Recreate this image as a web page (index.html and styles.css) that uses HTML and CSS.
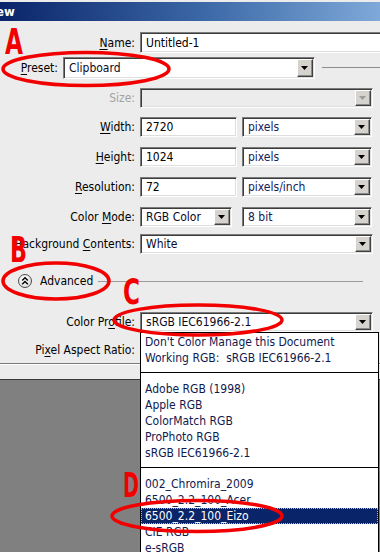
FILE: index.html
```html
<!DOCTYPE html>
<html>
<head>
<meta charset="utf-8">
<link rel="stylesheet" href="styles.css">
</head>
<body>
<div class="dialog">
  <div class="titlebar"><span class="title">ew</span></div>
  <div class="form">
    <div class="row r-name">
      <span class="lbl"><u>N</u>ame:</span>
      <div class="input wide">Untitled-1</div>
    </div>
    <div class="row r-preset">
      <span class="lbl lbl-preset"><u>P</u>reset:</span>
      <div class="select preset"><span class="val dark">Clipboard</span><span class="btn"><i class="tri"></i></span></div>
      <div class="rule"></div>
    </div>
    <div class="row r-size">
      <span class="lbl disabled">Size:</span>
      <div class="select full off"><span class="val"></span><span class="btn"><i class="tri"></i></span></div>
    </div>
    <div class="row r-gap10 r-first">
      <span class="lbl"><u>W</u>idth:</span>
      <div class="input num">2720</div>
      <div class="select unit"><span class="val">pixels</span><span class="btn"><i class="tri"></i></span></div>
    </div>
    <div class="row r-gap10">
      <span class="lbl"><u>H</u>eight:</span>
      <div class="input num">1024</div>
      <div class="select unit"><span class="val">pixels</span><span class="btn"><i class="tri"></i></span></div>
    </div>
    <div class="row r-gap10">
      <span class="lbl"><u>R</u>esolution:</span>
      <div class="input num">72</div>
      <div class="select unit"><span class="val">pixels/inch</span><span class="btn"><i class="tri"></i></span></div>
    </div>
    <div class="row r-gap10">
      <span class="lbl">Color <u>M</u>ode:</span>
      <div class="select mode"><span class="val dark">RGB Color</span><span class="btn"><i class="tri"></i></span></div>
      <div class="select bit"><span class="val">8 bit</span><span class="btn"><i class="tri"></i></span></div>
    </div>
    <div class="row r-bg">
      <span class="lbl">Background <u>C</u>ontents:</span>
      <div class="select full"><span class="val dark">White</span><span class="btn"><i class="tri"></i></span></div>
    </div>
    <div class="row r-adv">
      <span class="adv-btn">
        <svg width="10" height="10" viewBox="0 0 10 10"><polyline points="2.2,4.6 5,1.8 7.8,4.6" fill="none" stroke="#000" stroke-width="1.4"/><polyline points="2.2,8.2 5,5.4 7.8,8.2" fill="none" stroke="#000" stroke-width="1.4"/></svg>
      </span>
      <span class="adv-text">Advanced</span>
      <span class="adv-line"></span>
    </div>
    <div class="row r-profile">
      <span class="lbl">Color Pr<u>o</u>file:</span>
      <div class="select full"><span class="val dark">sRGB IEC61966-2.1</span><span class="btn"><i class="tri"></i></span></div>
    </div>
    <div class="row r-par">
      <span class="lbl">Pi<u>x</u>el Aspect Ratio:</span>
      <div class="select full"><span class="val"></span><span class="btn"><i class="tri"></i></span></div>
    </div>
    <div class="etch"></div>
  </div>
</div>

<div class="menu">
  <div class="item">Don't Color Manage this Document</div>
  <div class="item">Working RGB:  sRGB IEC61966-2.1</div>
  <div class="sep"></div>
  <div class="item">Adobe RGB (1998)</div>
  <div class="item">Apple RGB</div>
  <div class="item">ColorMatch RGB</div>
  <div class="item">ProPhoto RGB</div>
  <div class="item">sRGB IEC61966-2.1</div>
  <div class="sep"></div>
  <div class="item">002_Chromira_2009</div>
  <div class="item">6500_2.2_100_Acer</div>
  <div class="item sel">6500_2.2_100_Eizo</div>
  <div class="item">CIE RGB</div>
  <div class="item">e-sRGB</div>
</div>

<svg class="marks" width="380" height="552" viewBox="0 0 380 552">
  <g class="ring">
    <ellipse cx="86" cy="69" rx="83" ry="16.5"/>
    <ellipse cx="56" cy="281" rx="53" ry="18"/>
    <ellipse cx="198" cy="320" rx="84" ry="15"/>
    <ellipse cx="197" cy="516" rx="85" ry="15.5"/>
  </g>
  <g class="letters">
    <text x="5" y="54" textLength="18" lengthAdjust="spacingAndGlyphs">A</text>
    <text x="10" y="262" textLength="17" lengthAdjust="spacingAndGlyphs">B</text>
    <text x="123" y="304" textLength="17" lengthAdjust="spacingAndGlyphs">C</text>
    <text x="123" y="497" textLength="16" lengthAdjust="spacingAndGlyphs" class="small">D</text>
  </g>
</svg>
</body>
</html>
```
FILE: styles.css
```css
* { box-sizing: border-box; }
html, body { margin: 0; }
body {
  width: 380px;
  height: 552px;
  overflow: hidden;
  position: relative;
  background: #808080;
  font: 12px/1 "DejaVu Sans Condensed", "DejaVu Sans", sans-serif;
  color: #000;
}
u { text-decoration: underline; text-underline-offset: 2px; }

.dialog {
  background: #ececec;
  height: 380px;
  padding-top: 2px;
  border-bottom: 1px solid #3a3a3a;
}
.titlebar {
  height: 19px;
  background: linear-gradient(90deg, #0a246a 0%, #3d6aa8 55%, #7fa9d9 100%);
  color: #fff;
  font-weight: bold;
  font-size: 13px;
  line-height: 19px;
  overflow: hidden;
  white-space: nowrap;
}
.title { display: inline-block; margin-left: -4px; }

.form { padding-top: 11px; }
.row { display: flex; align-items: center; height: 20px; }
.lbl {
  flex: none;
  width: 140px;
  padding-right: 5px;
  text-align: right;
  white-space: nowrap;
}
.lbl-preset { width: 63px; }
.disabled { color: #a3a3a3; }

.r-name { height: 21px; }
.r-preset { margin-top: 4px; height: 22px; }
.r-size { margin-top: 9px; }
.r-first { margin-top: 9px; }
.r-gap10 + .r-gap10 { margin-top: 10px; }
.r-bg { margin-top: 7px; }
.r-adv { margin-top: 20px; height: 14px; padding-left: 18px; }
.r-profile { margin-top: 24px; }
.r-par { margin-top: 8px; }

.input, .select {
  flex: none;
  height: 100%;
  background: #fff;
  border: 1px solid;
  border-color: #7b7b7b #fff #fff #7b7b7b;
  box-shadow: inset 1px 1px 0 #3c3c3c, inset -1px -1px 0 #dedede;
  white-space: nowrap;
  overflow: hidden;
}
.input {
  padding: 0 0 0 5px;
  display: flex;
  align-items: center;
}
.wide { width: 260px; border-right: 0; }
.num { width: 97px; }

.select { display: flex; padding: 1px; }
.val {
  flex: 1;
  padding-left: 4px;
  display: flex;
  align-items: center;
  color: #14205a;
}
.val.dark { color: #0a0a1e; }
.btn {
  flex: none;
  width: 16px;
  height: 100%;
  background: #d6d3ce;
  border: 1px solid;
  border-color: #fff #404040 #404040 #fff;
  box-shadow: inset -1px -1px 0 #8a8a8a;
  display: flex;
  align-items: center;
  justify-content: center;
}
.tri {
  display: block;
  width: 7px;
  height: 4px;
  background: #000;
  clip-path: polygon(0 0, 100% 0, 50% 100%);
  margin-left: -1px;
}
.preset { width: 252px; }
.full { width: 233px; }
.unit { width: 130px; margin-left: 5px; }
.mode { width: 92px; }
.bit { width: 130px; margin-left: 10px; }
.off { background: #ececec; }
.off .tri { background: #9c9c9c; }

.rule {
  flex: 1;
  height: 1px;
  margin-left: 7px;
  margin-bottom: 2px;
  background: #8c8c8c;
}

.adv-btn {
  flex: none;
  width: 14px;
  height: 14px;
  border-radius: 50%;
  border: 1px solid #4a4a4a;
  background: radial-gradient(circle at 40% 35%, #ffffff, #d6d6d6);
  display: flex;
  align-items: center;
  justify-content: center;
}
.adv-btn svg { display: block; }
.adv-text { margin-left: 8px; }
.adv-line {
  flex: 1;
  height: 1px;
  margin: 0 17px 0 5px;
  background: #9a9a9a;
}

.etch {
  margin-top: 3px;
  height: 2px;
  border-top: 1px solid #7a7a7a;
  border-bottom: 1px solid #fff;
}

.menu {
  position: absolute;
  left: 140px;
  top: 332px;
  width: 239px;
  height: 240px;
  background: #fff;
  border: 1px solid #000;
  padding-top: 1px;
  color: #101a50;
}
.item {
  height: 16px;
  line-height: 16px;
  padding-left: 4px;
  white-space: pre;
}
.item.sel {
  background: #0a246a;
  color: #fff;
  outline: 1px dotted #a9b4d6;
  outline-offset: -1px;
}
.sep {
  height: 7px;
  margin-bottom: 8px;
  border-bottom: 1px solid #000;
}

.marks {
  position: absolute;
  left: 0;
  top: 0;
  pointer-events: none;
}
.ring ellipse {
  fill: none;
  stroke: #f20000;
  stroke-width: 3.5;
}
.letters text {
  fill: #f20000;
  font-family: "DejaVu Sans Condensed", "DejaVu Sans", sans-serif;
  font-weight: bold;
  font-size: 36px;
}
.letters text.small { font-size: 33px; }
```
